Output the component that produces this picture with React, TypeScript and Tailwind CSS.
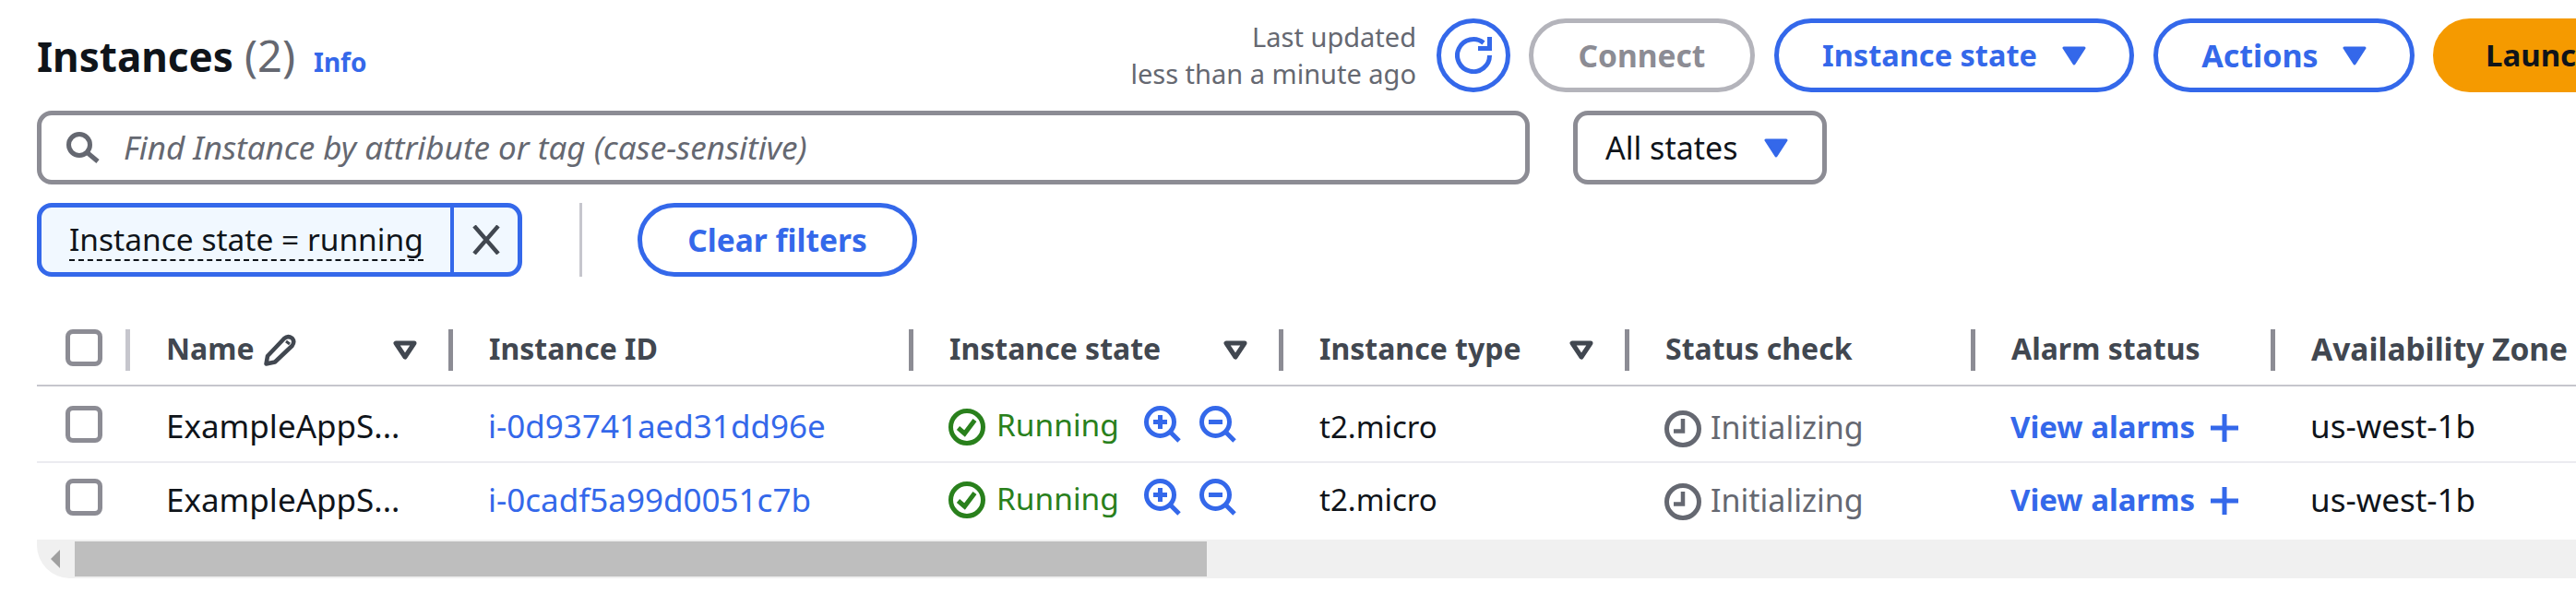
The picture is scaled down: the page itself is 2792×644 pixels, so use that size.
const font = "font-['Noto_Sans',sans-serif]";

const Caret = ({ className = "" }: { className?: string }) => (
  <svg viewBox="0 0 26 21" className={`w-[26px] h-[21px] shrink-0 ${className}`}>
    <path d="M2 2 H24 L13 19 Z" fill="#3468ea" stroke="#3468ea" strokeWidth="3" strokeLinejoin="round" />
  </svg>
);

const SortIcon = () => (
  <svg viewBox="0 0 26 21" className="w-[26px] h-[21px] shrink-0">
    <path d="M3 3 H23 L13 18 Z" fill="none" stroke="#414750" strokeWidth="5" strokeLinejoin="round" />
  </svg>
);

const Checkbox = () => <div className="w-[40px] h-[40px] rounded-[8px] border-[5px] border-[#8c8c94] bg-white shrink-0" />;

const RefreshIcon = () => (
  <svg viewBox="0 0 40 40" className="w-[40px] h-[40px]" fill="none" stroke="#3468ea" strokeWidth="5">
    <path d="M37.5 20 A17.5 17.5 0 1 1 31 6.5" />
    <path d="M37.5 0 V12.5 H25" />
  </svg>
);

const CheckCircle = () => (
  <svg viewBox="0 0 40 40" className="w-[40px] h-[40px] shrink-0 mt-[6px]" fill="none" stroke="#29801c" strokeWidth="5">
    <circle cx="20" cy="20" r="17.5" />
    <path d="M10.5 21 L17.5 27 L28.5 12.5" />
  </svg>
);

const ZoomIcon = ({ minus }: { minus?: boolean }) => (
  <svg viewBox="0 0 40 40" className="w-[40px] h-[40px] shrink-0" fill="none" stroke="#3468ea" strokeWidth="5">
    <circle cx="17.5" cy="17.5" r="15" />
    <path d="M28 28 L38 38" />
    <path d="M10 17.5 H25" />
    {!minus && <path d="M17.5 10 V25" />}
  </svg>
);

const ClockIcon = () => (
  <svg viewBox="0 0 40 40" className="w-[40px] h-[40px] shrink-0 mt-[10px]" fill="none" stroke="#656871" strokeWidth="5">
    <circle cx="20" cy="20" r="17.5" />
    <path d="M20 9 V22.5 H10" strokeWidth="4.5" />
  </svg>
);

const PencilIcon = () => (
  <svg viewBox="0 0 35 35" className="w-[35px] h-[35px] shrink-0" fill="none" stroke="#414750" strokeWidth="4.5" strokeLinejoin="round">
    <path d="M2.5 32.5 L4 24 L22 5 Q26 1.5 30.5 4.5 Q34 8.5 30.5 13 L12 30.5 Z" />
    <path d="M24 8 L28 11" strokeWidth="3" />
  </svg>
);

const SearchIcon = () => (
  <svg viewBox="0 0 36 34" className="w-[36px] h-[34px] shrink-0" fill="none" stroke="#656871" strokeWidth="5">
    <circle cx="14" cy="14" r="11.5" />
    <path d="M22 22 L34 32" />
  </svg>
);

const CloseIcon = () => (
  <svg viewBox="0 0 32 32" className="w-[32px] h-[32px]" fill="none" stroke="#414750" strokeWidth="4.5">
    <path d="M3 1 L29 31 M29 1 L3 31" />
  </svg>
);

const PlusIcon = () => (
  <svg viewBox="0 0 30 30" className="w-[30px] h-[30px] shrink-0 mt-[8px]" fill="none" stroke="#3468ea" strokeWidth="5">
    <path d="M15 0 V30 M0 15 H30" />
  </svg>
);

const pill = "h-[80px] rounded-[40px] border-[5px] flex items-center justify-center shrink-0 font-bold whitespace-nowrap";

const cols = ["w-[96px]", "w-[350px]", "w-[499px]", "w-[401px]", "w-[375px]", "w-[375px]", "w-[325px]", "w-[331px]"];

const HeaderCell = ({ col, label, sort, light, pencil, size = "text-[32px]" }: { col: number; label?: string; sort?: boolean; light?: boolean; pencil?: boolean; size?: string }) => (
  <div className={`${cols[col]} shrink-0 flex items-start`}>
    <div className={`w-[5px] h-[45px] shrink-0 ${light ? "bg-[#c6c6cd]" : "bg-[#8c8c94]"}`} />
    <div className="flex-1 flex items-center justify-between h-[45px] pl-[39px] pr-[34px]">
      <span className={`flex items-center gap-[10px] ${size} font-bold text-[#414750] whitespace-nowrap`}>
        <span className="mb-[3px]">{label}</span>
        {pencil && <PencilIcon />}
      </span>
      {sort && <SortIcon />}
    </div>
  </div>
);

const Row = ({ id }: { id: string }) => (
  <div className="flex h-[83px] items-center text-[33px] text-[#0f141a] border-b-2 border-[#ebebf0] last:border-b-0 last:pb-[9px]">
    <div className={`${cols[0]} shrink-0 pl-[31px]`}><Checkbox /></div>
    <div className={`${cols[1]} shrink-0 pl-[44px] pt-[6px] text-[35px] whitespace-nowrap`}>ExampleAppS...</div>
    <div className={`${cols[2]} shrink-0 pl-[43px] pt-[6px] text-[35px] text-[#3468ea]`}>{id}</div>
    <div className={`${cols[3]} shrink-0 pl-[43px] flex items-center text-[#29801c]`}>
      <CheckCircle />
      <span className="ml-[12px] mr-[27px] text-[33.5px] pt-[2px]">Running</span>
      <ZoomIcon />
      <span className="w-[20px]" />
      <ZoomIcon minus />
    </div>
    <div className={`${cols[4]} shrink-0 pl-[44px] pt-[6px]`}>t2.micro</div>
    <div className={`${cols[5]} shrink-0 pl-[43px] flex items-center gap-[10px] text-[34px] text-[#656871]`}>
      <ClockIcon />
      <span className="pt-[7px]">Initializing</span>
    </div>
    <div className={`${cols[6]} shrink-0 pl-[43px] flex items-center gap-[17px] font-bold text-[#3468ea]`}>
      <span className="pt-[6px]">View alarms</span>
      <PlusIcon />
    </div>
    <div className={`${cols[7]} shrink-0 pl-[43px] pt-[6px] text-[35px]`}>us-west-1b</div>
  </div>
);

export default function App() {
  return (
    <div className={`${font} w-[2792px] h-[644px] overflow-hidden bg-white pl-[40px] pt-[20px]`}>
      <div className="flex items-center h-[80px]">
        <div className="w-[1115px] shrink-0 flex items-baseline">
          <span className="text-[44px] font-bold text-[#0f141a]">Instances</span>
          <span className="ml-[12px] text-[47px] text-[#656871]">(2)</span>
          <span className="ml-[20px] text-[28px] font-bold text-[#3468ea]">Info</span>
        </div>
        <div className="w-[380px] shrink-0 mr-[22px] text-right text-[29px] leading-[40px] text-[#656871]">
          <div>Last updated</div>
          <div>less than a minute ago</div>
        </div>
        <button className="w-[80px] h-[80px] rounded-full border-[5px] border-[#3468ea] flex items-center justify-center shrink-0">
          <RefreshIcon />
        </button>
        <button className={`${pill} ml-[20px] w-[245px] text-[33.5px] border-[#b4b4bb] text-[#8c8c94]`}>Connect</button>
        <button className={`${pill} ml-[21px] w-[390px] text-[32.5px] border-[#3468ea] text-[#3468ea] gap-[27px]`}>
          Instance state
          <Caret />
        </button>
        <button className={`${pill} ml-[21px] w-[283px] text-[34px] border-[#3468ea] text-[#3468ea] gap-[26px]`}>
          Actions
          <Caret />
        </button>
        <button className={`${pill} ml-[20px] w-[420px] pl-[52px] justify-start text-[33px] border-[#f59a00] bg-[#f59a00] text-[#0f141a]`}>Launch instances</button>
      </div>

      <div className="flex mt-[20px] h-[80px]">
        <div className="w-[1618px] rounded-[16px] border-[5px] border-[#8c8c94] flex items-center pl-[27px]">
          <SearchIcon />
          <span className="ml-[26px] text-[35px] italic text-[#656871] whitespace-nowrap">Find Instance by attribute or tag (case-sensitive)</span>
        </div>
        <div className="ml-[47px] w-[275px] rounded-[16px] border-[5px] border-[#8c8c94] flex items-center pl-[30px] gap-[29px] text-[34px] text-[#0f141a] whitespace-nowrap">
          All states
          <Caret />
        </div>
      </div>

      <div className="flex mt-[20px] h-[80px]">
        <div className="w-[526px] rounded-[16px] border-[5px] border-[#3468ea] bg-[#f1f8ff] flex overflow-hidden">
          <div className="w-[447px] flex items-center pl-[30px] border-r-[4px] border-[#3468ea] text-[33.5px] text-[#0f141a]">
            <span className="border-b-2 border-dashed border-[#0f141a] leading-[44px] whitespace-nowrap">Instance state = running</span>
          </div>
          <div className="flex-1 flex items-center justify-center"><CloseIcon /></div>
        </div>
        <div className="ml-[62px] w-[3px] bg-[#c6c6cd]" />
        <button className={`${pill} ml-[60px] w-[303px] text-[33.5px] border-[#3468ea] text-[#3468ea]`}>Clear filters</button>
      </div>

      <div className="mt-[57px] w-[2752px]">
        <div className="flex h-[62px] border-b-[2px] border-[#c6c6cd]">
          <div className={`${cols[0]} shrink-0 pl-[31px]`}><Checkbox /></div>
          <HeaderCell col={1} label="Name" pencil sort light />
          <HeaderCell col={2} label="Instance ID" />
          <HeaderCell col={3} label="Instance state" sort />
          <HeaderCell col={4} label="Instance type" sort />
          <HeaderCell col={5} label="Status check" />
          <HeaderCell col={6} label="Alarm status" />
          <HeaderCell col={7} label="Availability Zone" size="text-[33.5px]" />
        </div>
        <div>
          <Row id="i-0d93741aed31dd96e" />
          <Row id="i-0cadf5a99d0051c7b" />
        </div>
        <div className="h-[42px] bg-[#f0f0f0] rounded-bl-[36px] flex items-center">
          <svg viewBox="0 0 10 20" className="w-[10px] h-[20px] ml-[15px] shrink-0"><path d="M10 0 V20 L0 10 Z" fill="#a0a0a0" /></svg>
          <div className="ml-[16px] w-[1227px] h-[38px] bg-[#bebebe]" />
        </div>
      </div>
    </div>
  );
}
